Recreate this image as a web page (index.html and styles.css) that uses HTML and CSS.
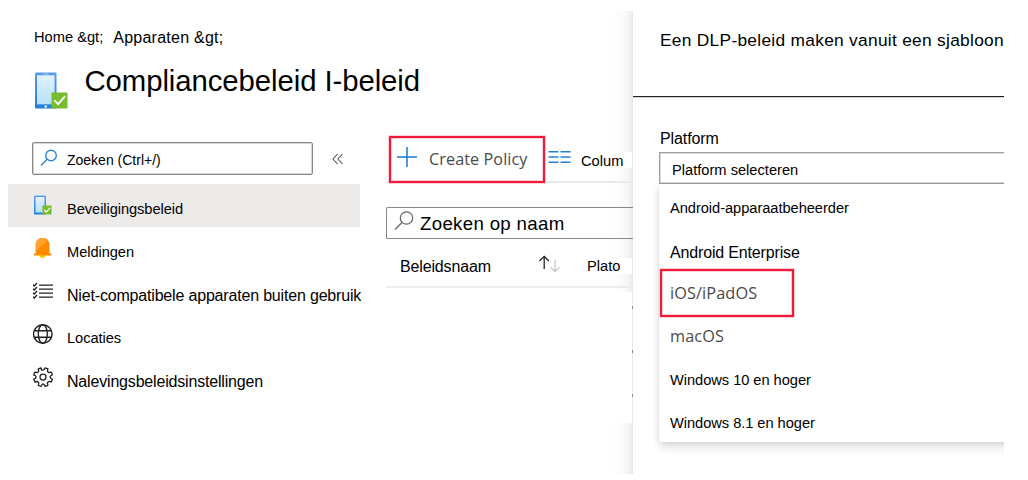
FILE: index.html
```html
<!DOCTYPE html>
<html lang="nl">
<head>
<meta charset="utf-8">
<title>Compliancebeleid</title>
<link rel="stylesheet" href="styles.css">
</head>
<body>
<div class="app">
  <main class="main">
    <nav class="crumbs"><span class="crumb">Home &amp;gt;</span><span class="crumb crumb-lg">Apparaten &amp;gt;</span></nav>
    <header class="heading">
      <svg class="device" width="34" height="37" viewBox="0 0 34 37">
        <defs>
          <linearGradient id="frame" x1="0" y1="0" x2="0" y2="1"><stop offset="0" stop-color="#5a9cf0"/><stop offset="1" stop-color="#1f7fd8"/></linearGradient>
          <linearGradient id="screen" x1="0" y1="0" x2="0" y2="1"><stop offset="0" stop-color="#e0f3fe"/><stop offset="1" stop-color="#b9dffa"/></linearGradient>
        </defs>
        <rect x="0" y="0.5" width="21.5" height="36" rx="1" fill="url(#frame)"/>
        <rect x="2" y="3.3" width="17.600" height="29" fill="url(#screen)"/>
        <rect x="8.500" y="1.5" width="5" height="1" fill="#a8d2f8"/>
        <rect x="9.500" y="33.5" width="2.4" height="2" fill="#fff"/>
        <rect x="16.500" y="20.5" width="16" height="16" fill="#76bc2d"/>
        <path d="M19.300 28.2l3.8 4 7-8" fill="none" stroke="#fff" stroke-width="1.800"/>
      </svg>
      <h1 class="title">Compliancebeleid I-beleid</h1>
    </header>
    <div class="columns">
      <aside class="sidebar">
        <div class="side-search">
          <div class="search-box">
            <svg width="18" height="18" viewBox="0 0 18 18" fill="none" stroke="#2b88d8" stroke-width="1.4"><circle cx="11" cy="6.5" r="5.3"/><path d="M7.2 10.3L1 16.5"/></svg>
            <span class="t14">Zoeken (Ctrl+/)</span>
          </div>
          <svg class="collapse" width="12" height="12" viewBox="0 0 12 12" fill="none" stroke="#555" stroke-width="1.1"><path d="M5.5 1L1 6l4.500 5M10.500 1L6 6l4.500 5"/></svg>
        </div>
        <ul class="menu">
          <li class="item active">
            <svg class="ico" width="22" height="22" viewBox="0 0 22 22"><rect x="1" y="1.500" width="12" height="19" rx="1" fill="url(#frame)"/><rect x="2.500" y="3" width="9" height="15.500" fill="url(#screen)"/><rect x="9.500" y="11.500" width="9" height="9" fill="#76bc2d"/><path d="M11.300 16l2 2.200 3.700-4.300" fill="none" stroke="#fff" stroke-width="1.200"/></svg>
            <span class="txt">Beveiligingsbeleid</span>
          </li>
          <li class="item">
            <svg class="ico bell" width="22" height="22" viewBox="0 0 22 22"><path d="M6.500 18h6a3 3 0 0 1-6 0z" fill="#ffca00"/><path d="M9.500 1c-4 0-6.800 2.700-6.800 7v8.500H1v2h17.500v-2h-2V8c0-4.300-3-7-7-7z" fill="#ff8c00"/><path d="M9.500 1c-4 0-6.800 2.700-6.800 7v6.500L14.800 2.700C13.400 1.600 11.500 1 9.500 1z" fill="#ffa230"/></svg>
            <span class="txt">Meldingen</span>
          </li>
          <li class="item">
            <svg class="ico list" width="22" height="22" viewBox="0 0 22 22" fill="none" stroke="#222" stroke-width="1.300"><path d="M6 3.200h14M6 7.200h14M6 11.200h14M6 15.200h14"/><path d="M0 2.800l1.300 1.200 2.700-3M0 6.800l1.300 1.200 2.700-3M0 10.800l1.300 1.200 2.700-3M0 14.800l1.300 1.200 2.700-3"/></svg>
            <span class="txt wide">Niet-compatibele apparaten buiten gebruik</span>
          </li>
          <li class="item">
            <svg class="ico low" width="22" height="22" viewBox="0 0 22 22" fill="none" stroke="#222" stroke-width="1.400"><circle cx="9.800" cy="10" r="9.300"/><ellipse cx="9.800" cy="10" rx="4.500" ry="9.300"/><path d="M1.300 6.800h17M1.300 13.200h17"/></svg>
            <span class="txt">Locaties</span>
          </li>
          <li class="item">
            <svg class="ico low" width="22" height="22" viewBox="0 0 22 22" fill="none" stroke="#222" stroke-width="1.300" stroke-linejoin="round"><path d="M8.500 3.200L8 .8l-2.700 1 .4 2.500-1.400 1.400-2.500-.5-1.100 2.700L2.900 9v2l-2.100 1.400 1.100 2.600 2.500-.5 1.400 1.400-.5 2.500 2.700 1.100L9.300 17.200h1.600l1.300 2.200 2.700-1.100-.5-2.500 1.400-1.400 2.500.5 1.100-2.700-2.200-1.400V9.200l2.200-1.400-1.100-2.600-2.500.5-1.400-1.400.5-2.500-2.700-1-1.400 2.100z"/><circle cx="10" cy="10.100" r="3"/></svg>
            <span class="txt wide">Nalevingsbeleidsinstellingen</span>
          </li>
        </ul>
      </aside>
      <section class="content">
        <div class="toolbar">
          <button class="create">
            <svg width="22" height="22" viewBox="0 0 22 22" stroke="#1a7ad4" stroke-width="1.500"><path d="M11 1v20M1 11h20"/></svg>
            <span>Create Policy</span>
          </button>
          <svg class="cols" width="23" height="14" viewBox="0 0 23 14" stroke="#2480d6" stroke-width="1.500"><path d="M0.500 1.700h10M12.500 1.700h10M0.500 7h10M12.500 7h10M0.500 12.300h10M12.500 12.300h10"/></svg>
          <span class="cols-label">Colum</span>
        </div>
        <div class="name-search">
          <svg width="20" height="20" viewBox="0 0 20 20" fill="none" stroke="#666" stroke-width="1.300"><circle cx="12.500" cy="7" r="6.200"/><path d="M8 11.500L1 18.500"/></svg>
          <span>Zoeken op naam</span>
        </div>
        <div class="thead">
          <span class="th-name">Beleidsnaam</span>
          <svg class="sort" width="23" height="18" viewBox="0 0 23 18" fill="none" stroke-width="1.300"><path d="M6.200 14V1.500M1.500 6l4.700-4.700L10.900 6" stroke="#222"/><path d="M17 5v11.500M12.500 12.200l4.500 4.500 4.500-4.500" stroke="#c8c8c8"/></svg>
          <span class="th-platform">Plato</span>
        </div>
        <div class="rows"><i></i><i></i><i></i></div>
      </section>
    </div>
  </main>
  <section class="panel">
    <h2 class="panel-title">Een DLP-beleid maken vanuit een sjabloon</h2>
    <div class="form">
      <label class="label">Platform</label>
      <div class="select">Platform selecteren</div>
      <ul class="options">
        <li>Android-apparaatbeheerder</li>
        <li class="big">Android Enterprise</li>
        <li class="ui marked"><span>iOS/iPadOS</span></li>
        <li class="ui">macOS</li>
        <li>Windows 10 en hoger</li>
        <li>Windows 8.1 en hoger</li>
      </ul>
    </div>
  </section>
</div>
</body>
</html>
```
FILE: styles.css
```css
* { box-sizing: border-box; }
body { margin: 0; background: #fff; color: #000; font: 14.67px "Liberation Sans", Arial, sans-serif; overflow: hidden; }
h1, h2, ul { margin: 0; padding: 0; font-weight: 400; list-style: none; }
svg { display: block; flex: none; }
span, li, label { white-space: nowrap; }

.app { display: grid; grid-template-columns: 633px 371px; width: 1004px; height: 474px; padding-top: 11px; }
.main { height: 463px; min-width: 0; background: linear-gradient(to right, #fff 612px, #f9f9f9 625px, #f2f2f2 630px, #e6e6e6 633px); }

.crumbs { display: flex; gap: 10px; height: 52px; padding: 16px 0 0 34px; line-height: 20px; }
.crumb-lg { font-size: 16px; line-height: 22px; letter-spacing: 0.25px; }
.heading { display: flex; height: 68px; padding-left: 35px; }
.device { margin-top: 9px; }
.title { margin-left: 15.500px; padding-top: 1px; font-size: 29.33px; line-height: 34px; letter-spacing: -0.08px; white-space: nowrap; }
.columns { display: grid; grid-template-columns: 386px 247px; }

.side-search { display: flex; align-items: flex-start; height: 53px; margin-top: 8px; padding: 3px 0 0 32px; }
.search-box { display: flex; width: 281px; height: 33px; padding: 6px 0 0 7px; border: 1px solid #8a8886; border-radius: 2px; background: #fff; box-shadow: inset 0 0 0 .5px #b0afae; }
.search-box .t14 { margin-left: 9px; font-size: 14px; line-height: 22px; }
.collapse { margin: 11px 0 0 19px; }
.menu { width: 352px; margin: -8px 0 0 8px; }
.item { display: flex; height: 43px; padding-left: 25px; }
.active { background: #edebe9; }
.ico { margin-top: 10px; }
.low { margin-top: 11px; }
.list { margin-top: 12px; }
.txt { margin: 5px 0 0 12px; line-height: 40px; letter-spacing: -0.07px; }
.wide { font-size: 16px; letter-spacing: -0.18px; line-height: 41px; }

.toolbar { display: flex; height: 52px; margin-right: 1px; border-bottom: 2px solid #e9e9e9; }
.create { display: flex; flex: none; width: 156px; height: 47px; margin: 5px 0 0 3px; padding: 8px 0 0 5px; border: 2px solid #ee1b3b; background: #fff; box-shadow: 0 0 0 .5px #f7a0ae, inset 0 0 0 .5px #f7a0ae; color: #4a4a4a; font: 16.200px/26px "Open Sans", "Noto Sans", sans-serif; text-align: left; }
.create span { margin-left: 11px; letter-spacing: 0.08px; }
.cols { margin: 19px 0 0 3px; }
.cols-label { height: 16px; flex: 1; margin: 21px 0 0 8px; padding-left: 2px; line-height: 18px; background: #fff; }
.name-search { display: flex; height: 32px; margin: 24px 0 0 0; padding: 3px 0 0 7px; border: 1px solid #888; border-right: 0; border-radius: 2px 0 0 2px; font-size: 18.67px; }
.name-search span { margin-left: 6px; line-height: 25px; letter-spacing: 0.32px; }
.thead { display: flex; height: 49px; padding: 17px 0 0 14px; border-bottom: 2px solid #ececec; }
.th-name { width: 138px; font-size: 16px; line-height: 22px; letter-spacing: -0.150px; }
.sort { margin: -1px 0 0 0; }
.th-platform { flex: 1; height: 16px; margin: 2px 1px 0 24px; padding-left: 2px; line-height: 17px; background: #fff; }
.rows { display: grid; align-content: start; justify-items: end; gap: 41px; width: 247px; height: 131px; margin-top: 4px; padding-top: 14px; border-right: 1px solid #e9e9e9; background: #fff; }
.rows i { width: 1px; height: 3px; margin-right: -1px; background: #888; }

.panel { position: relative; height: 463px; background: #fff; overflow: hidden; }
.panel-title { height: 86px; padding: 18px 0 0 27px; border-bottom: 1px solid #222; box-shadow: 0 .5px 0 #aaa; font-size: 17.33px; line-height: 22px; letter-spacing: 0.29px; white-space: nowrap; }
.form { padding: 31px 0 0 26px; }
.label { display: block; height: 24px; padding-left: 1px; font-size: 16px; line-height: 22px; letter-spacing: -0.1px; }
.select { width: 360px; height: 32px; padding-left: 12px; border: 1px solid #a0a0a0; box-shadow: inset 0 0 0 .5px #bbb; line-height: 35px; }
.options { width: 375px; height: 258px; padding-top: 1px; border-radius: 2px; background: #fff; box-shadow: 0 5px 10px rgba(0,0,0,.14), 0 0 3px rgba(0,0,0,.1); }
.options li { height: 43px; padding-left: 11px; line-height: 47px; letter-spacing: -0.05px; }
.options .big { font-size: 16px; letter-spacing: -0.16px; line-height: 49px; }
.options .ui { color: #4a4a4a; font: 16.300px/45px "Open Sans", "Noto Sans", sans-serif; letter-spacing: 0.1px; }
.options .marked { width: 134px; height: 48px; margin: -2px 0 -3px 1px; padding-left: 8px; border: 2px solid #ee1b3b; box-shadow: 0 0 0 .5px #f7a0ae, inset 0 0 0 .5px #f7a0ae; }
```
